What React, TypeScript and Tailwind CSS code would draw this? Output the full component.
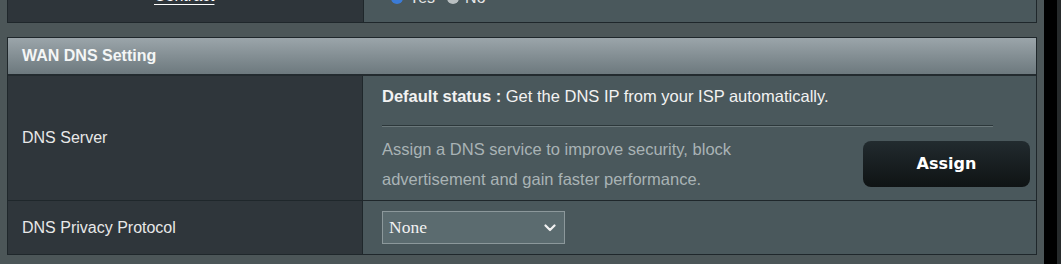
import React from "react";

const sans = { fontFamily: '"Liberation Sans", Arial, sans-serif' };

function TopRow() {
  // fila anterior, cortada arriba: solo se ve la parte baja
  return (
    <div className="flex h-[23px] border-b border-[#1f272b] overflow-hidden">
      <div className="w-[356px] bg-[#2e353a] border-r border-[#1f272b] relative">
        <div className="absolute left-[36px] top-[-14px] text-[16px] text-[#8d969a] tracking-[3px]">°°°°</div>
        <div className="absolute left-[146px] top-[-16px] text-[16px] text-white underline underline-offset-[3px]">Contract</div>
      </div>
      <div className="flex-1 bg-[#4a585c] relative">
        <div className="absolute left-[27px] top-[-14px] flex items-center gap-[6px] text-[16px] text-[#e6e6e6]">
          <span className="w-[12px] h-[12px] rounded-full bg-[#3b7bd6]" />
          <span>Yes</span>
          <span className="ml-[6px] w-[12px] h-[12px] rounded-full bg-[#b9bfc1]" />
          <span>No</span>
        </div>
      </div>
    </div>
  );
}

export default function App() {
  return (
    <div className="w-[1061px] h-[264px] overflow-hidden flex bg-[#4c5658]" style={sans}>
      <div className="flex-1 pl-[7px] pr-[7px]">
        <div className="border-x border-[#1f272b]">
          <TopRow />
        </div>

        <div className="mt-[14px] border border-[#1f272b]">
          {/* cabecera */}
          <div className="h-[38px] flex items-center px-[14px] bg-gradient-to-b from-[#9ba5aa] to-[#6d797e] border-b-2 border-[#232b2f]">
            <span className="text-[16px] font-bold text-[#f4f6f6]">WAN DNS Setting</span>
          </div>

          {/* DNS Server */}
          <div className="flex border-b border-[#1f272b]">
            <div className="w-[355px] shrink-0 bg-[#2f363b] border-r border-[#1f272b] flex items-center px-[14px]">
              <span className="text-[16px] text-[#e8e8e8]">DNS Server</span>
            </div>
            <div className="flex-1 bg-[#4a585c] pl-[19px] pr-[6px] pt-[8px] pb-[6px]">
              <div className="text-[16.5px] leading-[24px] text-[#f2f2f2]">
                <span className="font-bold">Default status : </span>
                Get the DNS IP from your ISP automatically.
              </div>
              <div className="mt-[17px] w-[611px] border-t border-[#2c373a] border-b border-b-[#6b787b]" />
              <div className="mt-[7px] flex items-center justify-between">
                <div className="w-[380px] text-[16.5px] leading-[30px] text-[#a9b3b5]">
                  Assign a DNS service to improve security, block advertisement and gain faster performance.
                </div>
                <button
                  type="button"
                  className="w-[167px] h-[46px] rounded-[8px] bg-gradient-to-b from-[#222b2f] to-[#0f1314] text-white text-[16px] font-bold"
                  style={{ fontFamily: '"DejaVu Sans", Verdana, sans-serif' }}
                >
                  Assign
                </button>
              </div>
            </div>
          </div>

          {/* DNS Privacy Protocol */}
          <div className="flex h-[53px]">
            <div className="w-[355px] shrink-0 bg-[#2f363b] border-r border-[#1f272b] flex items-center px-[14px]">
              <span className="text-[16px] text-[#e8e8e8]">DNS Privacy Protocol</span>
            </div>
            <div className="flex-1 bg-[#4a585c] pl-[19px] flex items-center">
              <div className="w-[183px] h-[33px] bg-[#5b6b6f] border border-[#8c989b] flex items-center justify-between pl-[6px] pr-[8px]">
                <span className="text-[17.5px] text-[#f2f2f2]" style={{ fontFamily: '"Liberation Serif", "Times New Roman", serif' }}>
                  None
                </span>
                <svg width="12" height="8" viewBox="0 0 12 8" fill="none">
                  <path d="M1.5 1.5 L6 6 L10.5 1.5" stroke="#f2f2f2" strokeWidth="2.2" strokeLinecap="round" strokeLinejoin="round" />
                </svg>
              </div>
            </div>
          </div>
        </div>
      </div>
      <div className="w-[13px] bg-black" />
      <div className="w-[4px] bg-[#262a2b]" />
    </div>
  );
}
